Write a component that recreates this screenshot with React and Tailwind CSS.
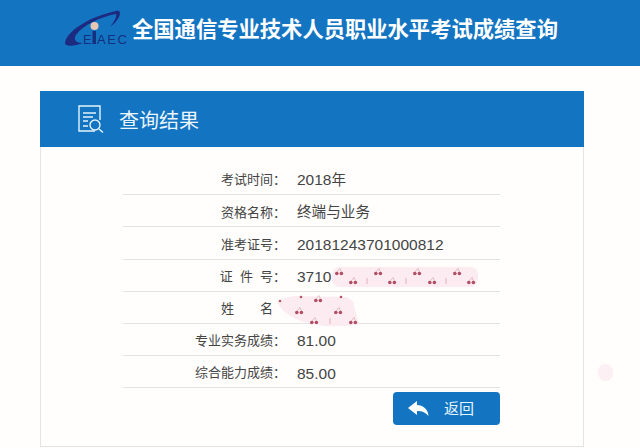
const cjk = { fontFamily: '"Liberation Sans","Noto Sans CJK SC",sans-serif' };

const rows = [
  ["考试时间：", <>2018<span className="text-[14.6px]">年</span></>],
  ["资格名称：", <span className="text-[14.6px]">终端与业务</span>],
  ["准考证号：", "20181243701000812"],
  ["证 件 号：", "3710"],
  ["姓　　名", ""],
  ["专业实务成绩：", "81.00"],
  ["综合能力成绩：", "85.00"],
];

function Cherry({ x, y, small }) {
  if (small) return <circle cx={x} cy={y} r="1.3" fill="#b5566c" />;
  return (
    <g transform={`translate(${x} ${y})`}>
      <circle cx="-2.2" cy="0.5" r="1.8" fill="#b04e64" />
      <circle cx="2.4" cy="0.5" r="1.8" fill="#b04e64" />
      <path d="M-2 -1 L1 -4.5 L2.5 -1" stroke="#c98a96" strokeWidth="0.5" fill="none" />
    </g>
  );
}

function IdMask() {
  return (
    <svg className="absolute left-[331px] top-[265px]" width="150" height="24" viewBox="0 0 150 24">
      <rect x="1" y="2" width="146" height="20" rx="8" fill="#fcecf1" />
      <Cherry x="8" y="8" /><Cherry x="22" y="17" /><Cherry x="47" y="8" /><Cherry x="61" y="17" />
      <Cherry x="86" y="8" /><Cherry x="101" y="17" /><Cherry x="126" y="8" /><Cherry x="140" y="17" />
      <path d="M36 13v6M75 13v6M115 13v6" stroke="#d9a3ae" strokeWidth="0.8" />
    </svg>
  );
}

function NameMask() {
  return (
    <svg className="absolute left-[276px] top-[294px]" width="88" height="34" viewBox="0 0 88 34">
      <path d="M1 8 Q10 2 20 2 L70 3 Q78 6 78 12 L83 30 Q70 33 60 32 Q48 33 38 30 Q26 28 18 24 Q6 18 1 8 Z" fill="#fcecf1" />
      <Cherry x="4" y="7" small /><Cherry x="25" y="3" small /><Cherry x="42" y="6" /><Cherry x="65" y="3" small />
      <Cherry x="23" y="18" /><Cherry x="62" y="18" /><Cherry x="38" y="28" /><Cherry x="77" y="28" />
      <path d="M54 24v6" stroke="#d9a3ae" strokeWidth="0.8" />
    </svg>
  );
}

export default function App() {
  return (
    <div className="relative w-[640px] h-[448px] overflow-hidden bg-[#fffefd]" style={cjk}>
      <header className="h-[66px] bg-[#1374c2] flex items-center pl-[64px]">
        <svg width="66" height="40" viewBox="0 0 66 40" className="shrink-0 mt-[-10px]">
          <path d="M1 35 C2 24 24 9 52 3 C56 2 57 5 55 9 C53 13 50 16 46 19 C50 14 53 9 52 6 C36 9 19 17 12 27 C9 32 12 35 19 35 C11 38 1 39 1 35Z" fill="#1c2a80" />
          <circle cx="30.5" cy="18" r="4" fill="#e8c6b4" />
          <text x="19" y="36" fontSize="13" fill="#14307e" fontFamily="Liberation Sans">E</text>
          <rect x="28.5" y="23" width="3.5" height="13" fill="#14307e" />
          <text x="33" y="36" fontSize="13" fill="#14307e" fontFamily="Liberation Sans" textLength="30">AEC</text>
        </svg>
        <h1 className="ml-[2px] text-[21.3px] leading-[30px] font-bold text-white whitespace-nowrap mt-[-6px]">全国通信专业技术人员职业水平考试成绩查询</h1>
      </header>

      <main className="ml-[40px] mt-[25px] w-[544px] h-[356px] border border-[#e4e4e4] flex flex-col">
        <div className="h-[56px] -m-px mb-0 bg-[#1374c2] flex items-center pl-[37px] shrink-0">
          <svg width="27" height="30" viewBox="0 0 27 30" fill="none" stroke="#e6f4fb" strokeWidth="1.4">
            <path d="M18 27H2V2h21v14" />
            <path d="M6 9h13M6 13h10M6 17h5M6 22h5" />
            <circle cx="18" cy="21" r="5" />
            <path d="M22 25l4 3.5" />
          </svg>
          <span className="ml-[15px] mt-[3px] text-[20px] leading-none text-[#eaf5fb] font-normal">查询结果</span>
        </div>
        <div className="ml-[82px] w-[377px] mt-[16px]">
          {rows.map(([label, value]) => (
            <div key={label} className="h-[32.2px] pt-[3px] flex items-center border-b border-[#e3e3e3]">
              <span className={`w-[163px] shrink-0 text-right text-[13px] text-[#444] whitespace-pre ${label === "证 件 号：" ? "[word-spacing:3.5px]" : ""} ${label === "姓　　名" ? "pr-[13px]" : ""}`}>{label}</span>
              <span className="ml-[11px] text-[15.5px] text-[#444] whitespace-nowrap">{value}</span>
            </div>
          ))}
          <div className="flex justify-end mt-[4px]">
            <button className="w-[107px] h-[33px] rounded-[4px] bg-[#1374c2] flex items-center pl-[15px] text-[#e6f6fb] text-[15px]">
              <svg width="21" height="16" viewBox="0 0 21 16" fill="#fff">
                <path d="M0 7 L9 0 V4 C15 4 20 8 20.5 15 C17 11 14 10 9 10 V14 Z" />
              </svg>
              <span className="ml-[15px]">返回</span>
            </button>
          </div>
        </div>
      </main>

      <IdMask />
      <NameMask />
      <div className="absolute left-[598px] top-[364px] w-[15px] h-[17px] rounded-full bg-[#fdf0f4]" />
    </div>
  );
}
